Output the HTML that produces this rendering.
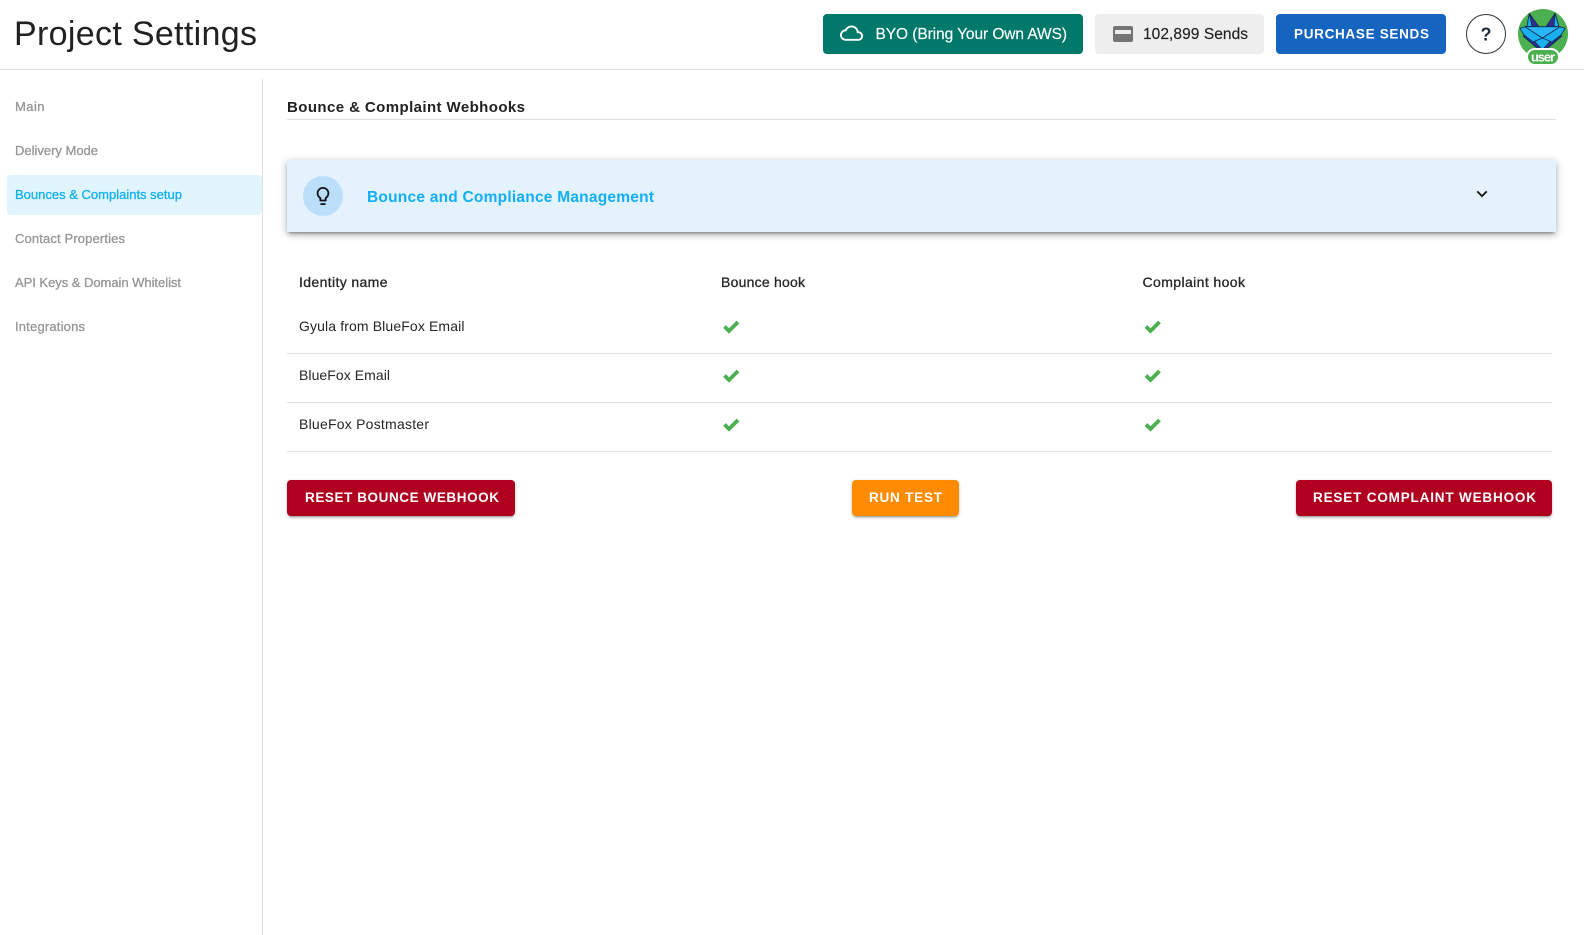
<!DOCTYPE html>
<html lang="en">
<head>
<meta charset="utf-8">
<title>Project Settings</title>
<style>
html,body{margin:0;padding:0;background:#fff;}
body{position:relative;width:1584px;height:935px;overflow:hidden;font-family:"Liberation Sans",sans-serif;}
.b{position:absolute;box-sizing:border-box;}
.r{border-radius:4px;}
.btn{box-shadow:0 3px 1px -2px rgba(0,0,0,.2),0 2px 2px 0 rgba(0,0,0,.14),0 1px 5px 0 rgba(0,0,0,.12);}
svg.t{position:absolute;left:0;top:0;width:1584px;height:935px;}
svg.t text{font-family:"Liberation Sans",sans-serif;}
.nav{font-size:13px;fill:#969696;stroke:#969696;stroke-width:.3px;}
.cell{font-size:14px;fill:#262626;}
.head{font-size:14px;fill:#262626;stroke:#262626;stroke-width:.3px;}
.cap{font-size:13.5px;font-weight:700;fill:#fff;}
</style>
</head>
<body>
<!-- header -->
<div class="b" style="left:0;top:69px;width:1584px;height:1px;background:#e0e0e0"></div>
<div class="b r" style="left:823px;top:14px;width:260px;height:40px;background:#00796b"></div>
<div class="b r" style="left:1095px;top:14px;width:169px;height:40px;background:#eeeeee"></div>
<div class="b r" style="left:1276px;top:14px;width:170px;height:40px;background:#1565c0"></div>
<div class="b" style="left:1466px;top:14px;width:40px;height:40px;border:1px solid #333;border-radius:50%"></div>

<!-- sidebar -->
<div class="b" style="left:262px;top:79px;width:1px;height:856px;background:#e0e0e0"></div>
<div class="b" style="left:7px;top:175px;width:255px;height:40px;background:#e1f5fe;border-radius:4px"></div>

<!-- content -->
<div class="b" style="left:287px;top:119px;width:1269px;height:1px;background:#e0e0e0"></div>
<div class="b" style="left:287px;top:160px;width:1269px;height:72px;background:#e3f2fd;box-shadow:0 3px 3px -2px rgba(0,0,0,.35),0 3px 6px 0 rgba(0,0,0,.2),0 1px 10px 0 rgba(0,0,0,.14)"></div>
<div class="b" style="left:303px;top:176px;width:40px;height:40px;background:#bbdefb;border-radius:50%"></div>
<div class="b" style="left:287px;top:353px;width:1265px;height:1px;background:#e0e0e0"></div>
<div class="b" style="left:287px;top:402px;width:1265px;height:1px;background:#e0e0e0"></div>
<div class="b" style="left:287px;top:451px;width:1265px;height:1px;background:#e0e0e0"></div>
<div class="b r btn" style="left:287px;top:480px;width:228px;height:36px;background:#b00020"></div>
<div class="b r btn" style="left:852px;top:480px;width:107px;height:36px;background:#ff8c00"></div>
<div class="b r btn" style="left:1296px;top:480px;width:256px;height:36px;background:#b00020"></div>

<svg class="t" viewBox="0 0 1584 935" xmlns="http://www.w3.org/2000/svg">
  <text x="14" y="45" font-size="34" fill="#212121" textLength="243">Project Settings</text>

  <!-- cloud -->
  <path transform="translate(840 21.6) scale(.96)" fill="#fff" d="M19.35 10.04C18.67 6.59 15.64 4 12 4 9.11 4 6.6 5.64 5.35 8.04 2.34 8.36 0 10.91 0 14c0 3.31 2.69 6 6 6h13c2.76 0 5-2.24 5-5 0-2.64-2.05-4.78-4.65-4.96zM19 18H6c-2.21 0-4-1.79-4-4s1.79-4 4-4h.71C7.37 7.69 9.48 6 12 6c3.04 0 5.5 2.46 5.5 5.5v.5H19c1.66 0 3 1.34 3 3s-1.34 3-3 3z"/>
  <text x="875.5" y="39" font-size="15.500" fill="#fff" stroke="#fff" stroke-width=".15" textLength="191.5">BYO (Bring Your Own AWS)</text>

  <!-- card -->
  <rect x="1113" y="26" width="20" height="16" rx="2" fill="#757575"/>
  <rect x="1115" y="30" width="16" height="4" fill="#eeeeee"/>
  <text x="1143" y="39" font-size="15.500" fill="#212121" stroke="#212121" stroke-width=".15" textLength="105">102,899 Sends</text>
  <text x="1294" y="38.500" class="cap" textLength="135">PURCHASE SENDS</text>

  <text x="1486" y="40.500" font-size="18" font-weight="700" fill="#1f2a3a" text-anchor="middle">?</text>

  <!-- avatar -->
  <g transform="translate(1518 9)">
    <circle cx="25" cy="25" r="25" fill="#4caf50"/>
    <g stroke="#10284f" stroke-width=".8" stroke-linejoin="round">
      <polygon points="11.300,4.300 9,17.700 21,17.700" fill="#2e2f8f"/>
      <polygon points="37,4.300 28,17.700 41,17.700" fill="#2e2f8f"/>
      <polygon points="11.300,4.300 9,17.700 14,17.700" fill="#1ab0f0"/>
      <polygon points="37,4.300 41,17.700 36,17.700" fill="#1ab0f0"/>
      <polygon points="5,27 13,27 24.300,41 19,39" fill="#2e2f8f"/>
      <polygon points="44,27 36,27 24.300,41 30,39" fill="#2e2f8f"/>
      <polygon points="12,27 37,27 24.300,41" fill="#1ab0f0"/>
      <polygon points="2,19.300 7,17.700 24.300,29 15,33 6,26" fill="#1ab0f0"/>
      <polygon points="47.300,19.300 42,17.700 24.300,29 34,33 43,26" fill="#1ab0f0"/>
      <polygon points="7,17.700 42,17.700 24.300,29" fill="#29b6f6"/>
    </g>
  </g>
  <rect x="1527" y="49" width="32" height="16" rx="8" fill="#4caf50" stroke="#fff" stroke-width="2"/>
  <text x="1543" y="61.500" font-size="13" font-weight="700" fill="#fff" text-anchor="middle" textLength="24">user</text>

  <!-- sidebar text -->
  <text x="15" y="111" class="nav" textLength="29.5">Main</text>
  <text x="15" y="155" class="nav" textLength="83">Delivery Mode</text>
  <text x="15" y="199" class="nav" style="fill:#12aff5;stroke:#12aff5" textLength="167">Bounces &amp; Complaints setup</text>
  <text x="15" y="243" class="nav" textLength="110">Contact Properties</text>
  <text x="15" y="287" class="nav" textLength="166">API Keys &amp; Domain Whitelist</text>
  <text x="15" y="331" class="nav" textLength="70">Integrations</text>

  <text x="287" y="112" font-size="15" font-weight="700" fill="#212121" textLength="238">Bounce &amp; Complaint Webhooks</text>

  <!-- panel -->
  <path transform="translate(312.200 185.200) scale(.9)" fill="#111" d="M9 21c0 .55.45 1 1 1h4c.55 0 1-.45 1-1v-1H9v1zm3-19C8.14 2 5 5.14 5 9c0 2.38 1.19 4.47 3 5.74V17c0 .55.45 1 1 1h6c.55 0 1-.45 1-1v-2.26c1.81-1.27 3-3.36 3-5.74 0-3.86-3.14-7-7-7zm2.85 11.1l-.85.6V16h-4v-2.3l-.85-.6C7.8 12.16 7 10.63 7 9c0-2.76 2.24-5 5-5s5 2.24 5 5c0 1.63-.8 3.16-2.15 4.1z"/>
  <text x="367" y="202" font-size="15.500" font-weight="700" fill="#12aff5" textLength="287">Bounce and Compliance Management</text>
  <path transform="translate(1471.200 183) scale(.9)" fill="#111" d="M16.59 8.59L12 13.17 7.41 8.59 6 10l6 6 6-6z"/>

  <!-- table -->
  <text x="299" y="287" class="head" textLength="88.5">Identity name</text>
  <text x="721" y="287" class="head" textLength="84">Bounce hook</text>
  <text x="1142.5" y="287" class="head" textLength="102.5">Complaint hook</text>

  <text x="299" y="331" class="cell" textLength="165.5">Gyula from BlueFox Email</text>
  <text x="299" y="380" class="cell" textLength="91">BlueFox Email</text>
  <text x="299" y="429" class="cell" textLength="130">BlueFox Postmaster</text>

  <g fill="none" stroke="#4caf50" stroke-width="3.8">
    <path d="M724.500 326.500l4.500 4.500 9-9"/>
    <path d="M1146 326.500l4.500 4.500 9-9"/>
    <path d="M724.500 375.500l4.500 4.500 9-9"/>
    <path d="M1146 375.500l4.500 4.500 9-9"/>
    <path d="M724.500 424.500l4.500 4.500 9-9"/>
    <path d="M1146 424.500l4.500 4.500 9-9"/>
  </g>

  <!-- buttons -->
  <text x="305" y="502" class="cap" textLength="194">RESET BOUNCE WEBHOOK</text>
  <text x="869" y="502" class="cap" textLength="73">RUN TEST</text>
  <text x="1313" y="502" class="cap" textLength="223">RESET COMPLAINT WEBHOOK</text>
</svg>
</body>
</html>
